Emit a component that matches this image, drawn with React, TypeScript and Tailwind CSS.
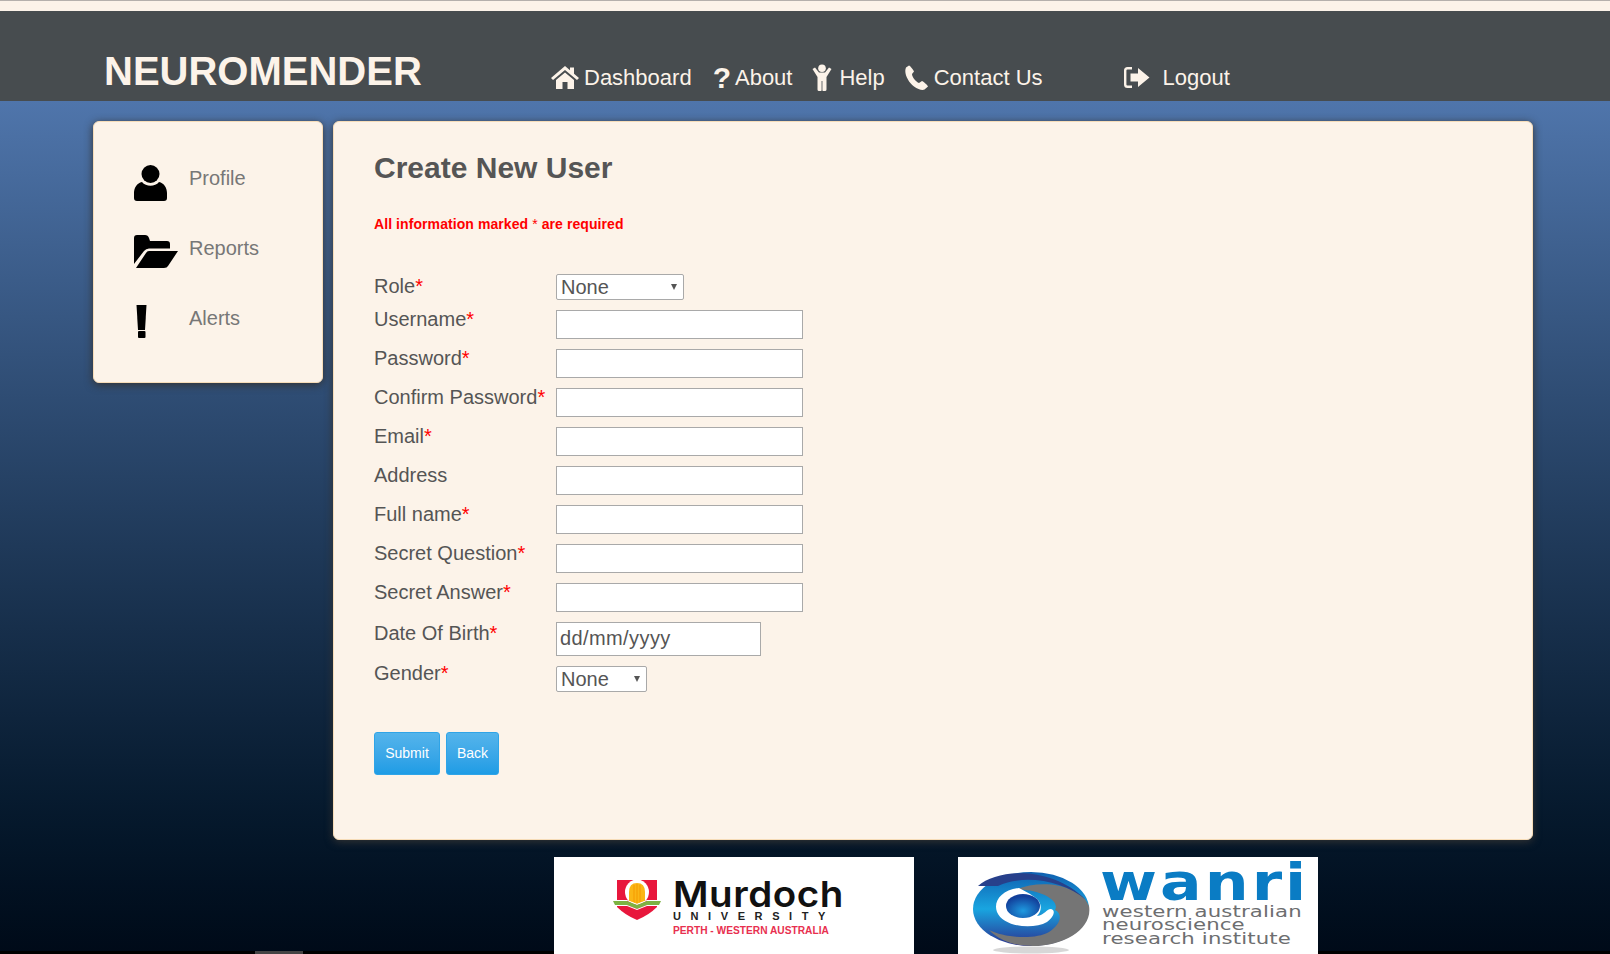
import React from "react";

const fields = [
  { label: "Username", required: true },
  { label: "Password", required: true },
  { label: "Confirm Password", required: true },
  { label: "Email", required: true },
  { label: "Address", required: false },
  { label: "Full name", required: true },
  { label: "Secret Question", required: true },
  { label: "Secret Answer", required: true },
];

const HomeIcon = () => (
  <svg width="28" height="23" viewBox="0 0 28 23" fill="#fcf3e9" className="shrink-0">
    <path d="M14 0 L0 12 L2 14 L14 4 L26 14 L28 12 L23 7.7 V1.5 H19 V4.3 Z" />
    <path d="M14 6.5 L5 14 V23 H11.5 V16 H16.5 V23 H23 V14 Z" />
  </svg>
);

const HelpIcon = () => (
  <svg width="20" height="27" viewBox="0 0 20 27" fill="#fcf3e9" className="shrink-0">
    <circle cx="10" cy="4.2" r="3.8" />
    <path d="M0.5 5 L3 3.5 L7 8.5 H13 L17 3.5 L19.5 5 L14.5 13 V25.5 Q14.5 27 13 27 H11 Q10.4 27 10.4 26 V17 H9.6 V26 Q9.6 27 9 27 H7 Q5.5 27 5.5 25.5 V13 Z" />
  </svg>
);

const PhoneIcon = () => (
  <svg width="24" height="25" viewBox="0 0 24 25" fill="#fcf3e9" className="shrink-0">
    <path d="M5 0.5 L2 2.5 C-0.5 8 4 17 10 21.5 C14 24.5 18.5 25.5 20.5 24.5 L24 21.5 C24 20.5 19 16 18 16 L15 18 C12 17 8 12 8 9 L10 6.5 C10 5.5 6 0.5 5 0.5 Z" />
  </svg>
);

const LogoutIcon = () => (
  <svg width="26" height="21" viewBox="0 0 26 21" className="shrink-0">
    <path d="M8 1.2 H3.5 Q1.2 1.2 1.2 3.5 V17.5 Q1.2 19.8 3.5 19.8 H8" fill="none" stroke="#fcf3e9" strokeWidth="2.4" />
    <path d="M6.5 6.5 H14 V1 L25.5 10.5 L14 20 V14.5 H6.5 Z" fill="#fcf3e9" />
  </svg>
);

const UserIcon = () => (
  <svg width="33" height="36" viewBox="0 0 33 36">
    <circle cx="16.5" cy="9" r="9" />
    <path d="M8 17 C12 22 21 22 25 17 C30 18 33 23 33 28 V33 Q33 36 30 36 H3 Q0 36 0 33 V28 C0 23 3 18 8 17 Z" />
  </svg>
);

const FolderIcon = () => (
  <svg width="44" height="33" viewBox="0 0 44 33">
    <path d="M0 3 Q0 0 3 0 H11 Q14 0 15 3 L16 6 H33 Q36 6 36 9 V13.5 H15 Q12 13.5 10 16 L0 29 Z" />
    <path d="M15 16 H44 L34 31 Q33 33 30 33 H2 L12 18 Q13 16 15 16 Z" />
  </svg>
);

const AlertIcon = () => (
  <svg width="11" height="33" viewBox="0 0 11 33" className="ml-[2px]">
    <path d="M0.5 0 H10.5 L9 25 H2 Z" />
    <rect x="2" y="26" width="7.5" height="7" rx="1" />
  </svg>
);

const ShieldIcon = () => (
  <svg width="48" height="40" viewBox="0 0 48 40">
    <path d="M4 0 H44 V27 Q36 35 24 40 Q12 35 4 27 Z" fill="#e8173c" />
    <ellipse cx="24" cy="12" rx="12" ry="12.5" fill="#fff" />
    <path d="M16 21 V12 Q16 3 24 3 Q32 3 32 12 V21 L24 24 Z" fill="#fbb616" />
    <path d="M21 5 V22 M24 4 V23 M27 5 V22" stroke="#f59a00" strokeWidth="1" />
    <path d="M2 20 H14 L24 24 L34 20 H46 V21 H34 L24 25 L14 21 H2 Z" fill="#fff" />
    <path d="M0 21 H14 L24 25 L34 21 H48 L46 25 H34 L24 29 L14 25 H2 Z" fill="#7cb342" />
    <path d="M3 25 H14 L24 29 L34 25 H45 V26 H34 L24 30 L14 26 H3 Z" fill="#fff" />
  </svg>
);

const SwirlIcon = () => (
  <svg width="118" height="82" viewBox="0 0 118 82">
    <defs>
      <linearGradient id="swirlBlue" x1="0" y1="0" x2="0" y2="1">
        <stop offset="0" stopColor="#0f5fb0" />
        <stop offset="0.5" stopColor="#19a5e0" />
        <stop offset="1" stopColor="#2b3290" />
      </linearGradient>
      <radialGradient id="swirlBall" cx="0.5" cy="0.7" r="0.6">
        <stop offset="0" stopColor="#1e9ae0" />
        <stop offset="1" stopColor="#123f9a" />
      </radialGradient>
    </defs>
    <ellipse cx="58" cy="78" rx="38" ry="3.5" fill="#bdbdbd" opacity="0.6" />
    <ellipse cx="58" cy="37" rx="58" ry="37" fill="url(#swirlBlue)" />
    <path d="M42 18 C70 6 108 14 116 34 C120 56 92 74 60 74 C40 74 26 68 16 58 C32 66 62 68 76 60 C88 52 90 42 82 38 C88 28 64 16 42 18 Z" fill="#757575" />
    <path d="M5 14 C25 -4 80 -6 113 28 C90 8 50 2 25 14 Z" fill="#27408b" />
    <path d="M46 16 C28 18 20 30 24 40 C30 55 60 58 74 50 C81 45 83 38 78 37 C73 37 72 43 64 44 C70 38 69 29 60 24 C56 21 50 18 46 16 Z" fill="#fff" />
    <ellipse cx="50" cy="34" rx="17" ry="12" fill="url(#swirlBall)" />
  </svg>
);

function Label({ text, required, className = "" }: { text: string; required: boolean; className?: string }) {
  return (
    <div className={`w-[182px] shrink-0 text-[20px] leading-[20px] text-[#555] ${className}`}>
      {text}
      {required && <span className="text-[#ff0000]">*</span>}
    </div>
  );
}

function Select({ className }: { className: string }) {
  return (
    <div className={`relative h-[26px] ${className}`}>
      <select className="h-full w-full appearance-none rounded-[2px] border border-[#a9a9a9] bg-white pl-[4px] text-[20px] leading-[22px] text-[#555]">
        <option>None</option>
      </select>
      <span className="pointer-events-none absolute right-[7px] top-[10px] h-0 w-0 border-x-[3px] border-t-[6px] border-x-transparent border-t-[#555]" />
    </div>
  );
}

export default function App() {
  return (
    <div className="relative h-[954px] overflow-hidden bg-[#fcf3e9] font-['Liberation_Sans',Arial,sans-serif]">
      <div className="h-[11px] border-t border-[#b5b0ac]" />

      <header className="flex h-[90px] items-start bg-[#474c4f] pl-[104px] text-[#fcf3e9]">
        <div className="mt-[35px] w-[317px] text-[40px] font-bold leading-[50px]">NEUROMENDER</div>
        <nav className="ml-[130px] mt-[53px] flex h-[27px] items-center text-[22px] leading-[27px]">
          <a className="flex items-center gap-[5px]"><HomeIcon />Dashboard</a>
          <a className="ml-[21px] flex items-center gap-[4px]">
            <span className="text-[30px] font-bold leading-[27px]">?</span>About
          </a>
          <a className="ml-[20px] flex items-center gap-[7px]"><HelpIcon />Help</a>
          <a className="ml-[19px] flex items-center gap-[6px]"><PhoneIcon />Contact Us</a>
          <a className="ml-[81px] flex items-center gap-[13px]"><LogoutIcon />Logout</a>
        </nav>
      </header>

      <div className="h-[853px] bg-gradient-to-b from-[#4f75ab] to-[#000a18]">
        <div className="flex gap-[10px] pl-[93px] pt-[20px]">
          <aside className="h-[262px] w-[230px] rounded-[6px] border border-[#f6dcb8] bg-[#fcf3e9] pl-[40px] pt-[21px] shadow-[0_2px_8px_#333]">
            {[
              { label: "Profile", icon: <UserIcon /> },
              { label: "Reports", icon: <FolderIcon /> },
              { label: "Alerts", icon: <AlertIcon /> },
            ].map((item) => (
              <div key={item.label} className="flex h-[70px] items-start">
                <div className="mt-[22px] flex w-[55px]">{item.icon}</div>
                <span className="mt-[21px] text-[20px] leading-[28px] text-[#777]">{item.label}</span>
              </div>
            ))}
          </aside>

          <main className="h-[719px] w-[1200px] rounded-[6px] border border-[#f6dcb8] bg-[#fcf3e9] pl-[40px] pt-[28px] shadow-[0_2px_8px_#333]">
            <h2 className="text-[30px] font-bold leading-[36px] text-[#555]">Create New User</h2>
            <p className="mt-[28px] text-[14px] font-bold leading-[20px] tracking-[0.08px] text-[#ff0000]">
              All information marked <span className="font-normal">*</span> are required
            </p>

            <form className="mt-[40px] flex flex-col gap-[10px]">
              <div className="flex items-start">
                <Label text="Role" required className="pt-[2px]" />
                <Select className="w-[128px]" />
              </div>
              {fields.map((f) => (
                <div key={f.label} className="flex items-start">
                  <Label text={f.label} required={f.required} className="-mt-[1px]" />
                  <input className="h-[29px] w-[247px] border border-[#a9a9a9] bg-white text-[20px] text-[#555]" />
                </div>
              ))}
              <div className="flex items-start">
                <Label text="Date Of Birth" required className="pt-[1px]" />
                <input
                  readOnly
                  value="dd/mm/yyyy"
                  className="h-[34px] w-[205px] border border-[#a9a9a9] bg-white px-[3px] pb-[2px] text-[20px] tracking-[0.4px] text-[#555]"
                />
              </div>
              <div className="flex items-start">
                <Label text="Gender" required className="-mt-[3px]" />
                <Select className="w-[91px]" />
              </div>
              <div className="mt-[30px] flex gap-[6px]">
                <button type="button" className="h-[43px] w-[66px] rounded-[3px] border border-[#2fa4e7] bg-gradient-to-b from-[#54b4eb] to-[#1d9ce5] text-[14px] text-white">
                  Submit
                </button>
                <button type="button" className="h-[43px] w-[53px] rounded-[3px] border border-[#2fa4e7] bg-gradient-to-b from-[#54b4eb] to-[#1d9ce5] text-[14px] text-white">
                  Back
                </button>
              </div>
            </form>
          </main>
        </div>

        <div className="mt-[17px] flex gap-[44px] pl-[554px]">
          <div className="flex h-[97px] w-[360px] items-start bg-white pl-[59px] pt-[23px]">
            <ShieldIcon />
            <div className="-mt-[2px] ml-[12px] flex flex-col">
              <span className="w-fit origin-left scale-x-[1.07] font-['Inter',sans-serif] text-[36px] font-semibold leading-[32px] tracking-[0.5px] text-[#111]">Murdoch</span>
              <span className="mt-[1px] text-[11px] font-bold leading-[11px] tracking-[9.6px] text-[#222]">UNIVERSITY</span>
              <span className="mt-[4px] text-[10.2px] font-bold leading-[10px] text-[#e8304f]">PERTH - WESTERN AUSTRALIA</span>
            </div>
          </div>
          <div className="flex h-[97px] w-[360px] items-start bg-white pl-[15px] pt-[15px]">
            <SwirlIcon />
            <div className="-mt-[13px] ml-[11px] flex flex-col">
              <span className="-ml-[2px] w-fit origin-left scale-x-[1.21] font-['DejaVu_Sans',sans-serif] text-[51px] font-bold leading-[47px] tracking-[2.5px] text-[#0a7cc4]">wanri</span>
              <span className="w-fit origin-left scale-x-[1.37] font-['DejaVu_Sans',sans-serif] text-[15.5px] leading-[13.3px] tracking-[0.1px] text-[#6d6e70]">western australian</span>
              <span className="w-fit origin-left scale-x-[1.37] font-['DejaVu_Sans',sans-serif] text-[15.5px] leading-[13.3px] tracking-[0.1px] text-[#6d6e70]">neuroscience</span>
              <span className="w-fit origin-left scale-x-[1.37] font-['DejaVu_Sans',sans-serif] text-[15.5px] leading-[13.3px] tracking-[0.1px] text-[#6d6e70]">research institute</span>
            </div>
          </div>
        </div>
      </div>

      <div className="absolute bottom-0 left-0 h-[3px] w-[554px] bg-black" />
      <div className="absolute bottom-0 left-[1318px] right-0 h-[3px] bg-black" />
      <div className="absolute bottom-0 left-[255px] h-[3px] w-[48px] bg-[#444]" />
    </div>
  );
}
